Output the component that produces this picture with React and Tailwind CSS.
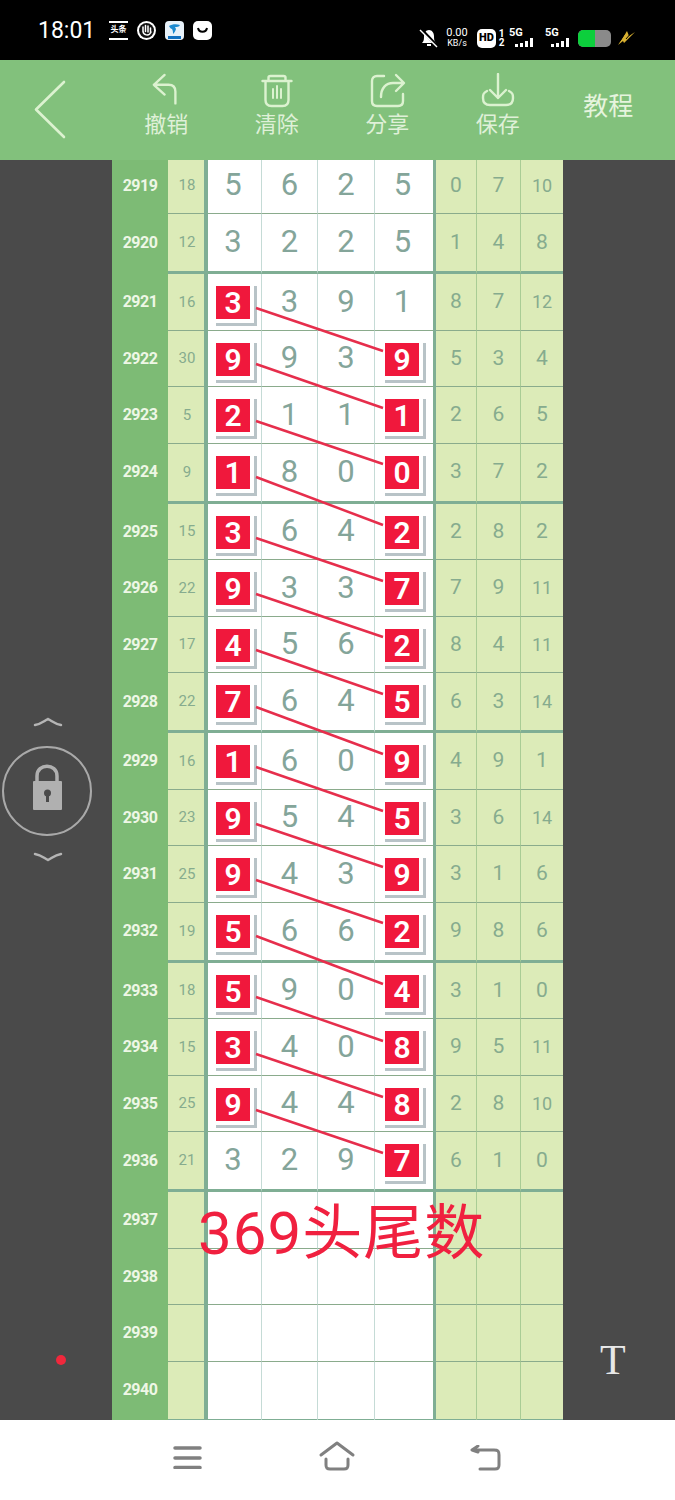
import React from "react";

const ROWS = [
  [2919, 18, "5625", 0, 7, 10],
  [2920, 12, "3225", 1, 4, 8],
  [2921, 16, "3391", 8, 7, 12],
  [2922, 30, "9939", 5, 3, 4],
  [2923, 5, "2111", 2, 6, 5],
  [2924, 9, "1800", 3, 7, 2],
  [2925, 15, "3642", 2, 8, 2],
  [2926, 22, "9337", 7, 9, 11],
  [2927, 17, "4562", 8, 4, 11],
  [2928, 22, "7645", 6, 3, 14],
  [2929, 16, "1609", 4, 9, 1],
  [2930, 23, "9545", 3, 6, 14],
  [2931, 25, "9439", 3, 1, 6],
  [2932, 19, "5662", 9, 8, 6],
  [2933, 18, "5904", 3, 1, 0],
  [2934, 15, "3408", 9, 5, 11],
  [2935, 25, "9448", 2, 8, 10],
  [2936, 21, "3297", 6, 1, 0],
  [2937],
  [2938],
  [2939],
  [2940],
];

// vertical centre of rows 2921..2936, measured from the top of the table
const CENTERS = [142, 198, 255, 311, 372, 428, 484, 541, 601, 658, 714, 770, 831, 888, 944, 1000];

const font = { fontFamily: 'Roboto, "Noto Sans CJK SC", sans-serif' };

function RedDigit({ value, last }) {
  return (
    <div className={`h-full flex items-start pt-[12px] ${last ? "pl-[10px]" : "pl-[8px]"}`}>
      <div className="border-r-[3px] border-b-[3px] border-[#b8c3c7] pr-[4px] pb-[4px]">
        <div className="w-[34px] h-[33px] bg-[#f0183c] text-white text-[30px] font-semibold flex items-center justify-center">
          {value}
        </div>
      </div>
    </div>
  );
}

function Row({ row, thick, first }) {
  const [id, sum, digits, x, y, z] = row;
  const base = thick ? "border-b-[3px] border-[#7fae94]" : "border-b border-[#8aab8c]";
  const light = `bg-[#dcebb8] flex items-center justify-center text-[#86ab8e] ${base}`;
  const white = `bg-white flex items-center justify-center text-[31px] text-[#84a59a] border-r border-r-[#c5dbd6] ${base}`;
  const height = thick ? "h-[60px]" : "h-[56.5px]";
  return (
    <div
      className={`grid grid-cols-[56px_36px_4px_54px_56px_57px_58px_3px_41px_44px_42px] ${height} ${first ? "-mt-[2.5px]" : ""}`}
    >
      <div className={`bg-[#7dbb75] text-[#eef7e6] text-[16px] font-bold tracking-[-0.5px] flex items-center justify-center ${thick ? "pb-[3px]" : ""}`}>
        {id}
      </div>
      <div className={`${light} text-[15px] pl-[2px]`}>{sum}</div>
      <div className="bg-[#7fae94]" />
      {[0, 1, 2, 3].map((i) => {
        const hit =
          digits &&
          ((i === 0 && id >= 2921 && id <= 2935) || (i === 3 && id >= 2922));
        const nudge = !hit && (i === 0 || i === 3);
        return (
          <div key={i} className={`${white} ${nudge ? "pr-[3px]" : ""} ${i === 3 ? "border-r-0" : ""}`}>
            {hit ? (
              <div className="w-full h-full">
                <RedDigit value={digits[i]} last={i === 3} />
              </div>
            ) : (
              digits && digits[i]
            )}
          </div>
        );
      })}
      <div className="bg-[#7fae94]" />
      {[x, y, z].map((v, i) => (
        <div
          key={i}
          className={`${light} ${v > 9 ? "text-[18px]" : "text-[21px]"} ${i < 2 ? "border-r border-r-[#a9cc95]" : ""}`}
        >
          {v}
        </div>
      ))}
    </div>
  );
}

function Lines() {
  return (
    <svg className="absolute left-0 top-0 pointer-events-none" width="451" height="1260">
      {CENTERS.slice(0, -1).map((c, i) => (
        <line
          key={i}
          x1="144"
          y1={c + 6}
          x2="271"
          y2={CENTERS[i + 1] - 7}
          stroke="#e62e4c"
          strokeWidth="2.5"
        />
      ))}
    </svg>
  );
}

function Table() {
  return (
    <div className="relative w-[451px] h-full overflow-hidden">
      {ROWS.map((row, i) => (
        <Row key={row[0]} row={row} first={i === 0} thick={(i - 1) % 4 === 0} />
      ))}
      <Lines />
      <div className="absolute left-[86px] top-[1036px] text-[60px] leading-[76px] tracking-[1px] text-[#f0203f] whitespace-nowrap">
        369头尾数
      </div>
    </div>
  );
}

function Signal({ className }) {
  return (
    <div className={`w-[29px] h-[20px] relative ${className}`}>
      <span className="absolute left-0 top-[-1px] text-[11px] font-bold leading-[12px]">5G</span>
      <div className="absolute left-[6px] bottom-[1px] flex items-end gap-[2px]">
        <i className="block w-[3px] h-[3px] bg-white" />
        <i className="block w-[3px] h-[4px] bg-white" />
        <i className="block w-[3px] h-[6px] bg-white" />
        <i className="block w-[3px] h-[9px] bg-white" />
      </div>
    </div>
  );
}

function StatusBar() {
  return (
    <div className="h-[60px] bg-black flex items-center text-white relative">
      <span className="ml-[38px] w-[71px] text-[23px] leading-none">18:01</span>
      <div className="flex gap-[9px]">
        <div className="w-[19px] h-[19px] bg-black border-y-2 border-white flex items-center justify-center text-[8px] font-bold leading-none whitespace-nowrap overflow-hidden">
          头条
        </div>
        <svg width="19" height="19" viewBox="0 0 19 19">
          <circle cx="9.5" cy="9.5" r="9.5" fill="#fff" />
          <circle cx="9.5" cy="9.5" r="7.5" fill="#111" />
          <path d="M6 6v5M8.5 4.5v6M11 5v6M13.5 7v5M6 10c0 4 6 6 8 1" stroke="#fff" strokeWidth="1.5" fill="none" strokeLinecap="round" />
        </svg>
        <svg width="19" height="19" viewBox="0 0 19 19">
          <rect width="19" height="19" rx="4" fill="#e8f2fa" />
          <path d="M4 5c3-2 8-2 11-1-1 2-3 2-5 2l1 2c-1 3-2 4-3 5 0-2 0-3-1-5-1 0-2-1-3-3z" fill="#1c8ad0" />
          <rect x="3" y="15" width="13" height="3" fill="#1070c0" />
        </svg>
        <svg width="19" height="19" viewBox="0 0 19 19">
          <rect width="19" height="19" rx="5" fill="#fff" />
          <path d="M5 7c1 5 8 5 9 0" stroke="#000" strokeWidth="2" fill="none" />
        </svg>
      </div>
      <div className="absolute left-[419px] top-[28px] h-[20px] flex items-center">
        <svg width="20" height="20" viewBox="0 0 20 20">
          <path d="M3 15c2-2 2-4 2-7 0-3 2-6 5-6s5 3 5 6 0 5 2 7z" fill="#fff" />
          <rect x="8" y="16" width="4" height="2" fill="#fff" />
          <path d="M2 1l17 18" stroke="#000" strokeWidth="3" />
          <path d="M1 2l17 17" stroke="#fff" strokeWidth="1.5" />
        </svg>
        <div className="ml-[6px] w-[24px] flex flex-col items-center text-[11px] leading-[10px]">
          <span>0.00</span>
          <span className="text-[9px] leading-[10px]">KB/s</span>
        </div>
        <div className="ml-[8px] w-[19px] h-[19px] bg-white rounded-[5px] text-black text-[11px] font-black flex items-center justify-center">
          HD
        </div>
        <div className="ml-[1px] w-[9px] flex flex-col items-center text-[10px] font-bold leading-[9px]">
          <span>1</span>
          <span>2</span>
        </div>
        <Signal className="ml-[3px]" />
        <Signal className="ml-[7px]" />
        <div className="ml-[4px] w-[33px] h-[17px] rounded-[5px] bg-[#8a8a8a] overflow-hidden">
          <div className="w-[17px] h-full bg-[#0ccf3c] rounded-l-[5px]" />
        </div>
        <svg className="ml-[6px]" width="19" height="17" viewBox="0 0 19 17">
          <path d="M10 1L1 15l5-4 1 2 11-11-6 4z" fill="#d8b030" />
          <path d="M8 3L3 11M15 2l-6 7" stroke="#000" strokeWidth="1" />
        </svg>
      </div>
    </div>
  );
}

function ToolButton({ label, children }) {
  return (
    <div className="w-[110.5px] flex flex-col items-center">
      <svg width="40" height="36" viewBox="0 0 40 36" fill="none" stroke="#dcf2d0" strokeWidth="2.4" strokeLinecap="round" strokeLinejoin="round">
        {children}
      </svg>
      <span className="text-[22px] leading-[26px] text-[#dff0d8] mt-[3px]">{label}</span>
    </div>
  );
}

function Header() {
  return (
    <div className="h-[100px] bg-[#82c17c] flex items-start">
      <div className="w-[111px] pt-[20px] pl-[33px]">
        <svg width="34" height="60" viewBox="0 0 34 60" fill="none" stroke="#dcf2d0" strokeWidth="2.6" strokeLinecap="round" strokeLinejoin="round">
          <path d="M31 2L3 29.5 31 57" />
        </svg>
      </div>
      <div className="flex pt-[13px]">
        <ToolButton label="撤销">
          <path d="M19 2L8 12l11 10M8 12h15c5 0 7 3 7 7v12" transform="scale(0.98)" />
        </ToolButton>
        <ToolButton label="清除">
          <path d="M8 8h29M14 8V4.5C14 3.500 15 3 16 3h13c1 0 2 .5 2 1.500V8M11 8v19c0 4 2 6 6 6h11c4 0 6-2 6-6V8" transform="translate(-2.500 0)" />
          <path d="M16 16v9M20 13v12M24 16v9" strokeWidth="2" />
        </ToolButton>
        <ToolButton label="分享">
          <path d="M17 3H10C7 3 5 5 5 8v20c0 3 2 5 5 5h21c3 0 5-2 5-5v-7" />
          <path d="M29 2l8 8-8 8M36 10H26c-7 0-12 5-12 14" />
        </ToolButton>
        <ToolButton label="保存">
          <path d="M20 1v24M12 17l8 8 8-8" />
          <path d="M9 18c-4 2-4 4-4 7 0 5 3 7 7 7h16c4 0 7-2 7-7 0-3 0-5-4-7" />
        </ToolButton>
        <div className="w-[110.5px] text-center text-[25px] leading-[30px] text-[#e6f4de] pt-[19px]">教程</div>
      </div>
    </div>
  );
}

function LockControl() {
  return (
    <div className="w-[112px] h-full pt-[556px] pl-[2px] flex flex-col">
      <svg className="ml-[31px]" width="30" height="12" viewBox="0 0 30 12" fill="none" stroke="#b5b5b5" strokeWidth="2.5" strokeLinecap="round">
        <path d="M2 9C8 8 11 5 15 3c4 2 7 5 13 6" />
      </svg>
      <svg className="mt-[17px]" width="90" height="92" viewBox="0 0 90 92">
        <circle cx="45" cy="46" r="44" fill="none" stroke="#a9a9a9" strokeWidth="2" />
        <path d="M35 37v-6c0-13 20-13 20 0v6" fill="none" stroke="#b0b0b0" strokeWidth="3.500" />
        <rect x="31" y="36" width="29" height="29" rx="1" fill="#b0b0b0" />
        <circle cx="45.500" cy="48" r="3.500" fill="#4a4a4a" />
        <rect x="44" y="49" width="3" height="8" fill="#4a4a4a" />
      </svg>
      <svg className="ml-[31px] mt-[14px]" width="30" height="12" viewBox="0 0 30 12" fill="none" stroke="#b5b5b5" strokeWidth="2.5" strokeLinecap="round">
        <path d="M2 3c6 1 9 4 13 6 4-2 7-5 13-6" />
      </svg>
      <div className="ml-[54px] mt-[492px] w-[10px] h-[10px] rounded-full bg-[#f0283c]" />
    </div>
  );
}

function NavBar() {
  return (
    <div className="h-[80px] bg-white relative flex items-start pt-[25px] pl-[172px]">
      <svg width="32" height="24" viewBox="0 0 32 24" fill="none" stroke="#808080" strokeWidth="3.500" strokeLinecap="round">
        <path d="M3 3h25M3 13h25M3 22.500h25" />
      </svg>
      <svg className="ml-[114px] -mt-[5px]" width="40" height="32" viewBox="0 0 40 32" fill="none" stroke="#808080" strokeWidth="3" strokeLinecap="round" strokeLinejoin="round">
        <path d="M3 15L19 3l16 12M8 19v6c0 3 1 4 4 4h14c3 0 4-1 4-4v-6" />
      </svg>
      <svg className="ml-[112px]" width="36" height="26" viewBox="0 0 36 26" fill="none" stroke="#808080" strokeWidth="3" strokeLinecap="round" strokeLinejoin="round">
        <path d="M8 1L2 5l6 2M3 5h21c4 0 5 1 5 5v10c0 3-1 4-4 4H10" />
      </svg>
    </div>
  );
}

export default function App() {
  return (
    <div className="w-[675px] h-[1500px] overflow-hidden bg-[#4a4a4a]" style={font}>
      <StatusBar />
      <Header />
      <div className="h-[1260px] flex">
        <LockControl />
        <Table />
        <div className="flex-1 pl-[37px] pt-[1175px] text-[42px] leading-[50px] text-[#e8e8e8]" style={{ fontFamily: '"Liberation Serif", serif' }}>
          T
        </div>
      </div>
      <NavBar />
    </div>
  );
}
